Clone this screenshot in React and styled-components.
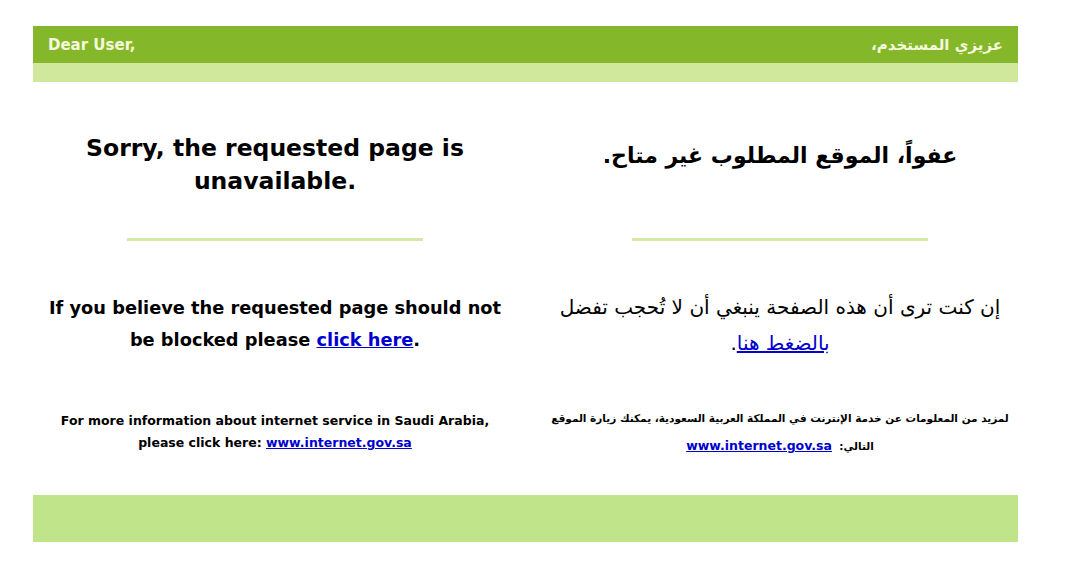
import React from "react";
import styled, { createGlobalStyle } from "styled-components";

const Global = createGlobalStyle`
  html, body { margin: 0; padding: 0; background: #fff; }
  body { font-family: "DejaVu Sans", Verdana, sans-serif; }
`;

const Page = styled.div`
  width: 985px;
  margin: 26px 0 0 33px;
`;

const TopBar = styled.div`
  height: 37px;
  background: #84b82a;
  display: flex;
  align-items: center;
  justify-content: space-between;
  padding: 0 15px;
  box-sizing: border-box;
  color: #f6f8dc;
  font-weight: bold;
  font-size: 15px;
`;

const ArabicHead = styled.span`
  direction: rtl;
  font-weight: bold;
  font-size: 15px;
`;

const Strip = styled.div`
  height: 19px;
  background: #cfe89b;
`;

const Columns = styled.div`
  display: grid;
  grid-template-columns: 484px 476px;
  column-gap: 25px;
  padding-top: 50px;
`;

const Col = styled.div`
  display: flex;
  flex-direction: column;
  align-items: center;
  text-align: center;
  direction: ${(p) => (p.$rtl ? "rtl" : "ltr")};
`;

const Heading = styled.h1`
  margin: 0;
  height: 92px;
  display: flex;
  align-items: flex-start;
  justify-content: center;
  padding-top: ${(p) => (p.$rtl ? "7px" : "0")};
  box-sizing: border-box;
  font-size: ${(p) => (p.$rtl ? "22px" : "23.5px")};
  line-height: 33px;
  font-weight: bold;
  color: #000;
  width: ${(p) => (p.$rtl ? "auto" : "400px")};
`;

const Divider = styled.div`
  width: 296px;
  height: 3px;
  background: #d4e8a8;
  margin-top: 14px;
`;

const Para = styled.p`
  margin: ${(p) => (p.$rtl ? "48px" : "51px")} 0 0;
  max-width: 462px;
  font-size: ${(p) => (p.$rtl ? "20px" : "17.8px")};
  line-height: ${(p) => (p.$rtl ? "36px" : "32px")};
  font-weight: ${(p) => (p.$rtl ? "normal" : "bold")};
  color: #000;
  height: ${(p) => (p.$rtl ? "105px" : "100px")};
`;

const Small = styled.p`
  margin: ${(p) => (p.$rtl ? "11px" : "18px")} 0 0;
  font-size: ${(p) => (p.$rtl ? "10.5px" : "12.5px")};
  line-height: ${(p) => (p.$rtl ? "27px" : "22px")};
  font-weight: bold;
  color: #000;
  white-space: nowrap;
`;

const Link = styled.a`
  color: #0000cc;
  text-decoration: underline;
  direction: ltr;
  font-size: 12.5px;
`;

const InlineLink = styled.a`
  color: #0000cc;
  text-decoration: underline;
`;

const Footer = styled.div`
  height: 47px;
  background: #c0e48a;
  margin-top: 35px;
`;

export default function App() {
  return (
    <>
      <Global />
      <Page>
        <TopBar>
          <span>Dear User,</span>
          <ArabicHead>عزيزي المستخدم،</ArabicHead>
        </TopBar>
        <Strip />
        <Columns>
          <Col>
            <Heading>Sorry, the requested page is unavailable.</Heading>
            <Divider />
            <Para>
              If you believe the requested page should not be blocked please{" "}
              <InlineLink href="#">click here</InlineLink>.
            </Para>
            <Small>
              For more information about internet service in Saudi Arabia,
              <br />
              please click here: <Link href="#">www.internet.gov.sa</Link>
            </Small>
          </Col>
          <Col $rtl>
            <Heading $rtl>عفواً، الموقع المطلوب غير متاح.</Heading>
            <Divider />
            <Para $rtl>
              إن كنت ترى أن هذه الصفحة ينبغي أن لا تُحجب تفضل
              <br />
              <InlineLink href="#">بالضغط هنا</InlineLink>.
            </Para>
            <Small $rtl>
              لمزيد من المعلومات عن خدمة الإنترنت في المملكة العربية السعودية، يمكنك زيارة الموقع
              <br />
              التالي:&nbsp; <Link href="#">www.internet.gov.sa</Link>
            </Small>
          </Col>
        </Columns>
        <Footer />
      </Page>
    </>
  );
}
